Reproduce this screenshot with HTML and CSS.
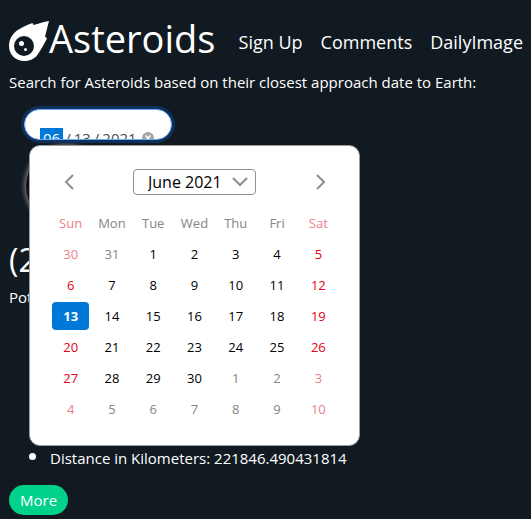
FILE: index.html
```html
<!DOCTYPE html>
<html lang="en-US">
<head>
<meta charset="utf-8">
<title>Asteroids</title>
<link rel="stylesheet" href="styles.css">
</head>
<body>
<header class="top">
  <svg class="logo" viewBox="0 0 40 40" aria-hidden="true">
    <path fill="#fff" fill-rule="evenodd" d="M40 0 36 15.500 38 17.500C35 23 32 29 28 34.500C24.500 38.500 20 40 15 40C6.500 40 0 33.500 0 25C0 18.500 3 13.500 8 9.500C13 6 18 4 23.500 2L24.500 4C29.500 2.500 35 1 40 0ZM15 15A10 10 0 1 0 15 35A10 10 0 1 0 15 15Z"/>
    <circle fill="#fff" cx="12.500" cy="22.500" r="2.500"/>
    <circle fill="#fff" cx="16.500" cy="28.500" r="1.500"/>
  </svg>
  <h1 class="brand">Asteroids</h1>
  <nav class="nav">
    <a href="#signup">Sign Up</a>
    <a href="#comments">Comments</a>
    <a href="#daily">DailyImage</a>
  </nav>
</header>
<main>
  <label class="prompt" for="approach">Search for Asteroids based on their closest approach date to Earth:</label>
  <div class="picker">
    <div class="field"><input class="date" id="approach" type="date" value="2021-06-13"><button class="clear" type="button" aria-label="Clear"><svg viewBox="0 0 12 12"><circle cx="6" cy="6" r="6" fill="#a3a5a7"/><path d="M3.500 3.500 8.500 8.500M8.500 3.500 3.500 8.500" stroke="#fff" stroke-width="1.500"/></svg></button></div>
    <div class="calendar">
      <div class="months">
        <button class="step" type="button" aria-label="Previous month"><svg viewBox="0 0 10 16"><path d="M9 1 2 8 9 15"/></svg></button>
        <div class="month">
          <select aria-label="Month"><option>June 2021</option></select>
          <svg viewBox="0 0 16 10"><path d="M1 1 8 8 15 1"/></svg>
        </div>
        <button class="step" type="button" aria-label="Next month"><svg viewBox="0 0 10 16"><path d="M2 1 9 8 2 15"/></svg></button>
      </div>
      <table class="days">
        <thead><tr><th>Sun</th><th>Mon</th><th>Tue</th><th>Wed</th><th>Thu</th><th>Fri</th><th>Sat</th></tr></thead>
        <tbody>
          <tr><td class="out">30</td><td class="out">31</td><td>1</td><td>2</td><td>3</td><td>4</td><td>5</td></tr>
          <tr><td>6</td><td>7</td><td>8</td><td>9</td><td>10</td><td>11</td><td>12</td></tr>
          <tr><td><span class="selected">13</span></td><td>14</td><td>15</td><td>16</td><td>17</td><td>18</td><td>19</td></tr>
          <tr><td>20</td><td>21</td><td>22</td><td>23</td><td>24</td><td>25</td><td>26</td></tr>
          <tr><td>27</td><td>28</td><td>29</td><td>30</td><td class="out">1</td><td class="out">2</td><td class="out">3</td></tr>
          <tr><td class="out">4</td><td class="out">5</td><td class="out">6</td><td class="out">7</td><td class="out">8</td><td class="out">9</td><td class="out">10</td></tr>
        </tbody>
      </table>
    </div>
  </div>
  <div class="photo"></div>
  <h2 class="name">(2</h2>
  <p class="hazard">Pot</p>
  <ul class="facts"><li>Distance in Kilometers: 221846.490431814</li></ul>
  <button class="more" type="button">More</button>
</main>
</body>
</html>
```
FILE: styles.css
```css
* { box-sizing: border-box; }
body {
  margin: 0;
  padding: 16px 8px 4px 9px;
  background: #111a21;
  color: #fff;
  font: 15px/24px "Open Sans", "Noto Sans", sans-serif;
}
button, input, select { font: inherit; }
.top { display: flex; align-items: center; height: 48px; }
.logo { width: 40px; height: 40px; flex: none; margin-top: 2px; }
.brand { margin: 0 0 4px; font-size: 38px; font-weight: 400; line-height: 48px; }
.nav { display: flex; gap: 18px; margin-left: auto; padding-top: 4px; font-size: 18px; }
.nav a { color: #fff; text-decoration: none; white-space: nowrap; }
.prompt { display: block; margin-top: 6px; white-space: nowrap; }
.picker { position: relative; margin: 15px 0 0 15px; }
.field {
  display: flex;
  align-items: flex-start;
  width: 148px;
  height: 31px;
  padding: 16px 0 0 15px;
  overflow: hidden;
  border: 1px solid #72aaf0;
  border-radius: 16px;
  background: #fff;
  box-shadow: 0 0 0 3px #0e305c;
}
.date {
  flex: none;
  width: 102px;
  height: 24px;
  padding: 0;
  border: 0;
  outline: 0;
  background: none;
  color: #4a4f57;
  font-size: 15px;
}
.date::-webkit-calendar-picker-indicator { display: none; }
.date::-webkit-datetime-edit-fields-wrapper { padding: 0; }
.date::-webkit-datetime-edit { padding: 0; }
.date::-webkit-datetime-edit-text { padding: 0 2px; }
.date::-webkit-datetime-edit-month-field { padding: 0 3px; background: #0078d7; color: #fff; }
.date::-webkit-datetime-edit-day-field,
.date::-webkit-datetime-edit-year-field { padding: 0 1px; }
.clear { width: 12px; height: 12px; margin-top: 6px; padding: 0; border: 0; background: none; }
.clear svg { display: block; width: 12px; }
.calendar {
  position: absolute;
  top: 36px;
  left: 5px;
  width: 331px;
  height: 301px;
  padding: 23px 20px 0;
  border: 1px solid #9a9c9e;
  border-radius: 11px;
  background: #fff;
  color: #000;
}
.months { display: flex; justify-content: space-between; align-items: center; padding: 0 9px; }
.step { width: 20px; height: 24px; padding: 0; border: 0; background: none; }
.step svg { display: block; width: 10px; margin: 0 auto; }
.calendar path { fill: none; stroke: #8f8f8f; stroke-width: 2; }
.month { display: grid; align-items: center; width: 123px; }
.month select {
  grid-area: 1 / 1;
  height: 26px;
  padding: 0 14px;
  border: 1px solid #8f9193;
  border-radius: 4px;
  background: #fff;
  color: #000;
  font-size: 16px;
  line-height: 24px;
  appearance: none;
}
.month svg { grid-area: 1 / 1; width: 16px; margin-right: 8px; justify-self: end; pointer-events: none; }
.days { width: 100%; margin-top: 12px; border-collapse: collapse; table-layout: fixed; font-size: 13px; text-align: center; }
.days th, .days td { height: 31px; padding: 0; line-height: 28px; }
.days th { color: #858585; font-weight: 400; }
.days td:first-child, .days td:last-child { color: #e60012; }
.days .out { color: #858585; }
.days th:first-child, .days th:last-child,
.days .out:first-child, .days .out:last-child { color: #f08088; }
.days .selected { display: block; width: 37px; margin: 0 auto; border-radius: 4px; background: #0078d7; color: #fff; font-weight: 700; }
.photo {
  width: 80px;
  height: 80px;
  margin: 6px 0 0 17px;
  border-radius: 50%;
  background: #170d18;
  box-shadow: 0 0 4px 2px #6d7278;
}
.name { margin: 10px 0 0; font-size: 32px; font-weight: 400; line-height: 48px; }
.hazard { margin: 1px 0 0; }
.facts { margin: 136px 0 0; padding-left: 41px; }
.facts li::marker { font-size: 20px; }
.more {
  display: block;
  min-width: 59px;
  height: 30px;
  margin-top: 15px;
  padding: 0 11px;
  border: 0;
  border-radius: 15px;
  background: #00d18b;
  color: #fff;
}
```
